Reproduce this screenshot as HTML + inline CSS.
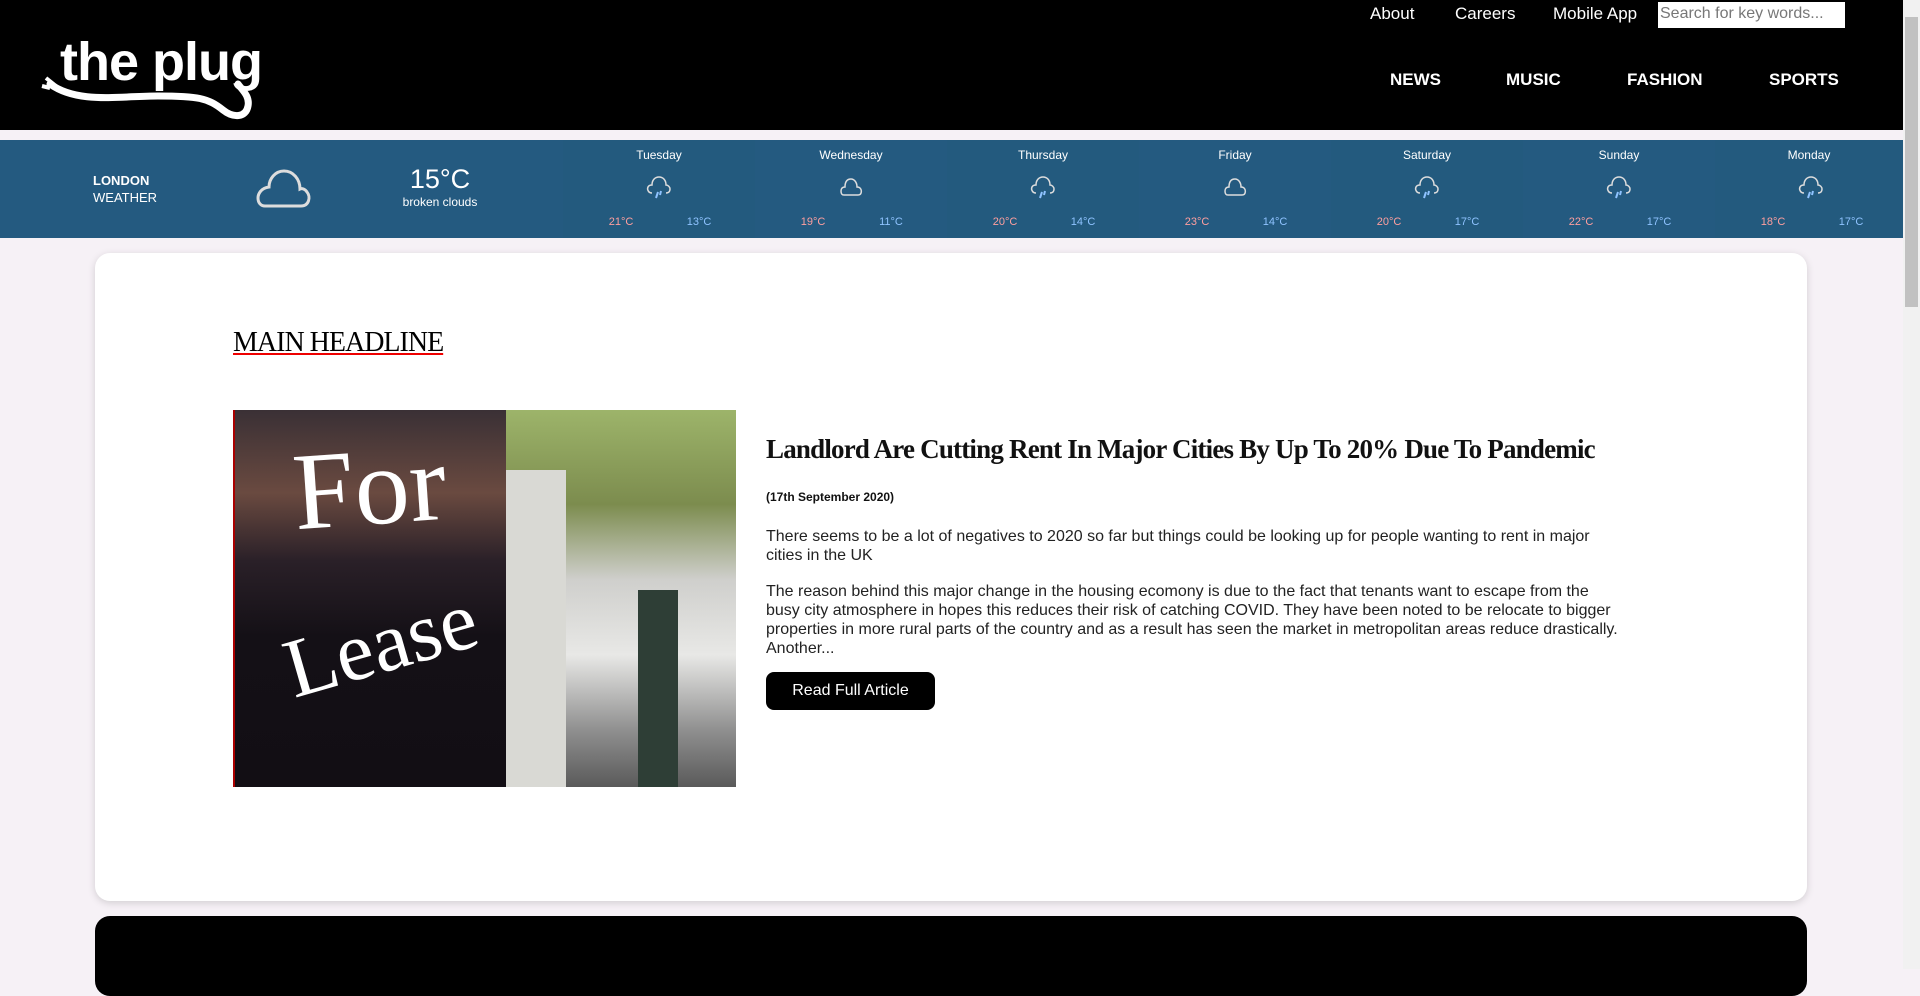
<!DOCTYPE html>
<html><head><meta charset="utf-8"><style>
*{margin:0;padding:0;box-sizing:border-box}
body{width:1920px;height:969px;overflow:hidden;background:#f6f1f6;font-family:"Liberation Sans",sans-serif;position:relative}
.abs{position:absolute}
#hdr{left:0;top:0;width:1903px;height:130px;background:#000}
.tl{color:#fff;font-size:17px;top:4px}
.nav{color:#fff;font-size:17px;font-weight:bold;top:70px}
#wx{left:0;top:140px;width:1903px;height:98px;background:#245a80}
.day{top:0;width:192px;height:98px;color:#fff;text-align:center}
.day .n{position:absolute;top:8px;width:100%;font-size:12px}
.day .hi{position:absolute;top:76px;left:40px;font-size:11px;color:#ff9f9f;width:36px;text-align:center}
.day .lo{position:absolute;top:76px;left:118px;font-size:11px;color:#8fc3ff;width:36px;text-align:center}
.day svg{position:absolute;left:82px;top:35px}
#card{left:95px;top:253px;width:1712px;height:648px;background:#fff;border-radius:15px;box-shadow:0 2px 8px rgba(0,0,0,.15)}
#card2{left:95px;top:916px;width:1712px;height:80px;background:#000;border-radius:15px}
p.t{font-size:16px;line-height:19px;color:#222;width:858px}
</style></head><body>
<div id="hdr" class="abs"></div>
<svg class="abs" style="left:38px;top:34px" width="256" height="86" viewBox="0 0 256 86">
<text x="22" y="46" font-family="Liberation Sans" font-weight="bold" font-size="54" fill="#fff" letter-spacing="-1">the plug</text>
<path d="M12 50 C40 70,80 62,120 62 S170 64,185 76 C195 84,208 84,210 72 C212 62,204 56,200 50" stroke="#fff" stroke-width="7" fill="none" stroke-linecap="round"/>
<path d="M8 44 l10 8 M4 52 l8 2" stroke="#fff" stroke-width="4"/>
</svg>
<div class="abs tl" style="left:1370px">About</div>
<div class="abs tl" style="left:1455px">Careers</div>
<div class="abs tl" style="left:1553px">Mobile App</div>
<div class="abs" style="left:1658px;top:2px;width:187px;height:26px;background:#fff;color:#777;font-size:16px;padding:3px 2px">Search for key words...</div>
<div class="abs nav" style="left:1390px">NEWS</div>
<div class="abs nav" style="left:1506px">MUSIC</div>
<div class="abs nav" style="left:1627px">FASHION</div>
<div class="abs nav" style="left:1769px">SPORTS</div>

<div id="wx" class="abs">
<div class="abs" style="left:93px;top:32px;color:#fff;font-size:13px;line-height:17px"><b>LONDON</b><br>WEATHER</div>
<svg class="abs" style="left:255px;top:29px" width="56" height="40" viewBox="0 0 56 40"><path d="M10 37 H46 C54 37,56 28,52 23 C50 20,47 19,45 20 C45 10,38 2,29 2 C20 2,14 10,14 18 C6 19,3 25,3 29 C3 34,6 37,10 37Z" fill="none" stroke="#ddd" stroke-width="3"/></svg>
<div class="abs" style="left:390px;top:24px;width:100px;text-align:center;color:#fff"><div style="font-size:27px">15°C</div><div style="font-size:12px">broken clouds</div></div>
</div>
<div class="abs" style="left:0;top:140px">
<div class="abs day" style="left:563px;background:#235a7e"><div class="n">Tuesday</div><svg width="28" height="28" viewBox="0 0 28 28"><path d="M7 18 C3 18,2 14,3 12 C4 10,6 10,7 10 C7 5,10 2,14 2 C18 2,21 5,21 10 C23 10,25 12,25 14 C25 17,23 18,21 18" fill="none" stroke="#ddd" stroke-width="1.5"/><path d="M13 17 l-2 6 M16 16 l-1 4" stroke="#8fc3ff" stroke-width="2"/></svg><div class="hi">21°C</div><div class="lo">13°C</div></div>
<div class="abs day" style="left:755px"><div class="n">Wednesday</div><svg width="28" height="28" viewBox="0 0 28 28"><path d="M7 20 H21 C25 20,25 15,23 13 C22 12,21 12,20 12 C20 7,17 4,14 4 C10 4,8 7,8 12 C5 12,4 14,4 16 C4 19,5 20,7 20Z" fill="none" stroke="#ddd" stroke-width="1.5"/></svg><div class="hi">19°C</div><div class="lo">11°C</div></div>
<div class="abs day" style="left:947px;background:#235a7e"><div class="n">Thursday</div><svg width="28" height="28" viewBox="0 0 28 28"><path d="M7 18 C3 18,2 14,3 12 C4 10,6 10,7 10 C7 5,10 2,14 2 C18 2,21 5,21 10 C23 10,25 12,25 14 C25 17,23 18,21 18" fill="none" stroke="#ddd" stroke-width="1.5"/><path d="M13 17 l-2 6 M16 16 l-1 4" stroke="#8fc3ff" stroke-width="2"/></svg><div class="hi">20°C</div><div class="lo">14°C</div></div>
<div class="abs day" style="left:1139px"><div class="n">Friday</div><svg width="28" height="28" viewBox="0 0 28 28"><path d="M7 20 H21 C25 20,25 15,23 13 C22 12,21 12,20 12 C20 7,17 4,14 4 C10 4,8 7,8 12 C5 12,4 14,4 16 C4 19,5 20,7 20Z" fill="none" stroke="#ddd" stroke-width="1.5"/></svg><div class="hi">23°C</div><div class="lo">14°C</div></div>
<div class="abs day" style="left:1331px;background:#235a7e"><div class="n">Saturday</div><svg width="28" height="28" viewBox="0 0 28 28"><path d="M7 18 C3 18,2 14,3 12 C4 10,6 10,7 10 C7 5,10 2,14 2 C18 2,21 5,21 10 C23 10,25 12,25 14 C25 17,23 18,21 18" fill="none" stroke="#ddd" stroke-width="1.5"/><path d="M13 17 l-2 6 M16 16 l-1 4" stroke="#8fc3ff" stroke-width="2"/></svg><div class="hi">20°C</div><div class="lo">17°C</div></div>
<div class="abs day" style="left:1523px"><div class="n">Sunday</div><svg width="28" height="28" viewBox="0 0 28 28"><path d="M7 18 C3 18,2 14,3 12 C4 10,6 10,7 10 C7 5,10 2,14 2 C18 2,21 5,21 10 C23 10,25 12,25 14 C25 17,23 18,21 18" fill="none" stroke="#ddd" stroke-width="1.5"/><path d="M13 17 l-2 6 M16 16 l-1 4" stroke="#8fc3ff" stroke-width="2"/></svg><div class="hi">22°C</div><div class="lo">17°C</div></div>
<div class="abs day" style="left:1715px;width:188px;background:#235a7e"><div class="n">Monday</div><svg width="28" height="28" viewBox="0 0 28 28"><path d="M7 18 C3 18,2 14,3 12 C4 10,6 10,7 10 C7 5,10 2,14 2 C18 2,21 5,21 10 C23 10,25 12,25 14 C25 17,23 18,21 18" fill="none" stroke="#ddd" stroke-width="1.5"/><path d="M13 17 l-2 6 M16 16 l-1 4" stroke="#8fc3ff" stroke-width="2"/></svg><div class="hi">18°C</div><div class="lo">17°C</div></div>
</div>

<div id="card" class="abs"></div>
<div class="abs" style="left:233px;top:327px;font-family:'Liberation Serif',serif;font-size:28px;text-decoration:underline;text-decoration-color:#e00;letter-spacing:-1px">MAIN HEADLINE</div>
<div class="abs" style="left:233px;top:410px;width:503px;height:377px;overflow:hidden">
<div class="abs" style="left:0;top:0;width:273px;height:377px;background:linear-gradient(180deg,#3a3035 0%,#6a4a40 22%,#2a2028 40%,#141016 60%,#120e14 100%);border-left:2px solid #a00"></div>
<div class="abs" style="left:60px;top:22px;color:#fff;font-family:'Liberation Serif',serif;font-size:110px;line-height:110px;transform:rotate(-4deg)">For</div>
<div class="abs" style="left:50px;top:190px;color:#fff;font-family:'Liberation Serif',serif;font-size:84px;line-height:90px;transform:rotate(-16deg)">Lease</div>
<div class="abs" style="left:273px;top:0;width:230px;height:377px;background:linear-gradient(180deg,#9db46a 0%,#7c8c4e 25%,#cfcfcc 45%,#e8e8e6 65%,#8f8f8f 85%,#5a5a5a 100%)"></div>
<div class="abs" style="left:273px;top:60px;width:60px;height:317px;background:#d9d9d4"></div>
<div class="abs" style="left:405px;top:180px;width:40px;height:197px;background:#2e3e36"></div>
</div>
<div class="abs" style="left:766px;top:434px;font-family:'Liberation Serif',serif;font-weight:bold;font-size:27px;letter-spacing:-0.8px;color:#111">Landlord Are Cutting Rent In Major Cities By Up To 20% Due To Pandemic</div>
<div class="abs" style="left:766px;top:490px;font-size:12px;font-weight:bold;color:#111">(17th September 2020)</div>
<p class="abs t" style="left:766px;top:527px">There seems to be a lot of negatives to 2020 so far but things could be looking up for people wanting to rent in major cities in the UK</p>
<p class="abs t" style="left:766px;top:582px">The reason behind this major change in the housing ecomony is due to the fact that tenants want to escape from the busy city atmosphere in hopes this reduces their risk of catching COVID. They have been noted to be relocate to bigger properties in more rural parts of the country and as a result has seen the market in metropolitan areas reduce drastically. Another...</p>
<div class="abs" style="left:766px;top:672px;width:169px;height:38px;background:#000;border-radius:8px;color:#fff;font-size:16px;text-align:center;line-height:38px">Read Full Article</div>
<div id="card2" class="abs"></div>
<div class="abs" style="left:1903px;top:0;width:17px;height:969px;background:#f1f1f1"></div>
<div class="abs" style="left:1905px;top:17px;width:13px;height:290px;background:#c1c1c1"></div>
</body></html>
